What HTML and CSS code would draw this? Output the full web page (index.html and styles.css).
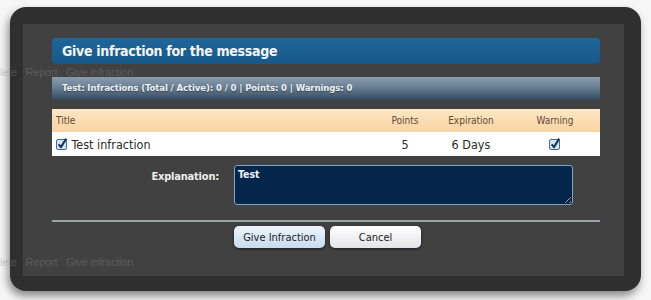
FILE: index.html
```html
<!doctype html>
<html lang="en">
    <head>
        <meta charset="UTF-8" />
        <meta name="viewport" content="width=device-width, initial-scale=1.0" />
        <title>Give Infraction</title>
        <link rel="stylesheet" href="styles.css">
    </head>
    <body>
        <div class="ghost ghost-top">lete &nbsp; Report &nbsp; Give infraction</div>
        <div class="ghost ghost-bottom">lete &nbsp; Report &nbsp; Give infraction</div>

        <div class="frame">
            <div class="panel">
                <h2 class="title-bar">Give infraction for the message</h2>

                <div class="info-bar">Test: Infractions (Total / Active): 0 / 0 | Points: 0 | Warnings: 0</div>

                <div class="infractions">
                    <div class="row head">
                        <div class="cell title">Title</div>
                        <div class="cell">Points</div>
                        <div class="cell">Expiration</div>
                        <div class="cell">Warning</div>
                    </div>
                    <div class="row body">
                        <div class="cell title">
                            <svg class="check" width="12" height="13" viewBox="0 0 12 13"><rect x="0.5" y="2.5" width="10" height="10" rx="1.5" fill="#d3e3f4" stroke="#3d6b9b"/><path d="M2.6 7.4 L5 10 L10.2 1.6" fill="none" stroke="#143352" stroke-width="2"/></svg>
                            Test infraction
                        </div>
                        <div class="cell">5</div>
                        <div class="cell">6 Days</div>
                        <div class="cell">
                            <svg class="check" width="12" height="13" viewBox="0 0 12 13"><rect x="0.5" y="2.5" width="10" height="10" rx="1.5" fill="#d3e3f4" stroke="#3d6b9b"/><path d="M2.6 7.4 L5 10 L10.2 1.6" fill="none" stroke="#143352" stroke-width="2"/></svg>
                        </div>
                    </div>
                </div>

                <div class="explain">
                    <label for="explanation">Explanation:</label>
                    <textarea id="explanation">Test</textarea>
                </div>

                <div class="actions">
                    <button type="button" class="btn primary">Give Infraction</button>
                    <button type="button" class="btn">Cancel</button>
                </div>
            </div>
        </div>
    </body>
</html>
```

FILE: styles.css
```css
* {
    box-sizing: border-box;
    margin: 0;
    padding: 0;
}

body {
    font-family: "DejaVu Sans Condensed", "DejaVu Sans", sans-serif;
    font-stretch: condensed;
    background-color: #f6f6f6;
    width: 651px;
    height: 300px;
    overflow: hidden;
    position: relative;
}

.frame {
    margin: 7px 0 0 10px;
    width: 631px;
    height: 284px;
    padding: 17px 17px 15px 13px;
    background-color: #2f2f2f;
    border-radius: 16px;
    box-shadow: -2px 5px 9px rgba(0, 0, 0, 0.45);
}

.panel {
    height: 100%;
    background-color: #414141;
    padding: 14px 24px 0 29px;
}

.title-bar {
    height: 26px;
    padding-left: 10px;
    line-height: 26px;
    font-size: 14px;
    letter-spacing: -0.3px;
    font-weight: bold;
    color: #f4f6f8;
    background: linear-gradient(#1f669a, #175888);
    border-radius: 4px;
}

.info-bar {
    margin-top: 13px;
    height: 23px;
    padding-left: 10px;
    line-height: 22px;
    font-size: 9.5px;
    letter-spacing: -0.1px;
    font-weight: bold;
    color: #eef1f4;
    text-shadow: 0 1px 1px rgba(0, 0, 0, 0.4);
    background: linear-gradient(#8a9dad, #687f93 45%, #34495f);
}

.infractions {
    margin-top: 9px;
}

.row {
    display: grid;
    grid-template-columns: 1fr 54px 78px 90px;
    align-items: center;
    text-align: center;
}

.row .title {
    text-align: left;
    padding-left: 4px;
}

.head {
    height: 23px;
    font-size: 10px;
    color: #5c4a36;
    background: linear-gradient(#fde6c4, #f8d4a3);
}

.body {
    height: 24px;
    font-size: 12.5px;
    color: #2b2b2b;
    background-color: #fff;
}

.check {
    vertical-align: -1px;
}

.explain {
    margin-top: 9px;
    display: flex;
    gap: 15px;
}

.explain label {
    width: 167px;
    padding-top: 5px;
    text-align: right;
    font-size: 11px;
    letter-spacing: -0.2px;
    font-weight: bold;
    color: #eeeeee;
}

.explain textarea {
    width: 339px;
    height: 40px;
    padding: 2px 3px;
    font-family: inherit;
    font-stretch: condensed;
    font-size: 10.5px;
    font-weight: bold;
    color: #f2f4f8;
    background-color: #03264a;
    border: 1px solid #7fa3c4;
    border-radius: 3px;
    outline: none;
}

.actions {
    margin-top: 15px;
    border-top: 2px solid #9aa7a8;
    padding: 4px 0 0 182px;
    display: flex;
    gap: 5px;
}

.btn {
    width: 91px;
    height: 22px;
    font-family: inherit;
    font-stretch: condensed;
    font-size: 11px;
    color: #222;
    border: none;
    border-radius: 5px;
    background: linear-gradient(#ffffff, #e4e4e8);
    box-shadow: 0 1px 3px rgba(0, 0, 0, 0.6);
    cursor: pointer;
}

.btn.primary {
    background: linear-gradient(#eef5fc, #c6dcef);
}

.ghost {
    position: absolute;
    left: 0;
    font-family: "Liberation Sans", sans-serif;
    font-size: 11px;
    letter-spacing: -0.2px;
    color: rgba(135, 135, 135, 0.4);
    white-space: nowrap;
    pointer-events: none;
}

.ghost-top {
    top: 66px;
}

.ghost-bottom {
    top: 256px;
}
```
